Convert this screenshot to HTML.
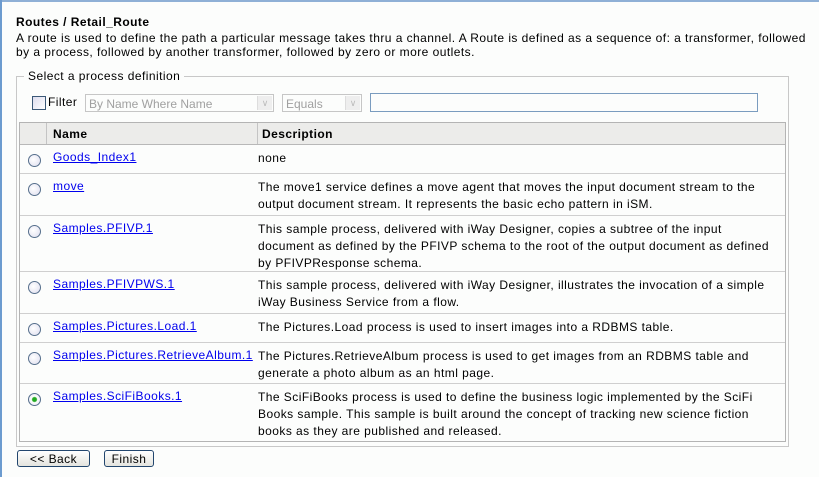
<!DOCTYPE html>
<html><head><style>
body{margin:0;width:819px;height:477px;background:#fcfdfc;font-family:"Liberation Sans",Arial,sans-serif;font-size:12px;color:#000;position:relative;overflow:hidden;letter-spacing:0.45px}
.lb{position:absolute;left:0;top:0;width:2px;height:477px;background:#6c9bcf}
.tb{position:absolute;left:0;top:0;width:819px;height:2px;background:#8fb0d6}
.a{position:absolute}
h1{position:absolute;left:16px;top:15px;margin:0;font-size:12px;font-weight:bold}
.intro{left:16px;top:31px;line-height:14px;width:800px}
.fs{left:16px;top:76px;width:771px;height:369px;border:1px solid #c8c8c8}
.leg{left:24px;top:69px;background:#fcfdfc;padding:0 4px;font-size:12px}
.sel{border:1px solid #c6c6c6;background:#fcfdfc;color:#a0a0a0;height:18px;line-height:18px;padding-left:3px;box-sizing:border-box;letter-spacing:0}
.arr{position:absolute;right:1px;top:1px;width:14px;height:14px;background:#eee;border-left:1px solid #ddd;color:#bbb;font-size:9px;text-align:center;line-height:14px}
.tbl{left:19px;top:122px;width:765px;height:318px;border:1px solid #b4b4b4}
.hd{left:0;top:0;width:765px;height:21px;background:#ececea;border-bottom:1px solid #b8b8b8}
.row{position:absolute;left:0;width:765px;border-bottom:1px solid #cfcfcf}
.row a{position:absolute;left:33px;top:5px;color:#0000ee;text-decoration:underline}
.row .d{position:absolute;left:238px;top:5px;width:519px;line-height:17px}
.rad{position:absolute;left:8px;width:11px;height:11px;border:1px solid #566f8c;border-radius:50%;background:radial-gradient(circle at 40% 40%,#fff,#dde);}
.btn{border:1px solid #22466e;border-radius:3px;background:linear-gradient(#fff,#e4e4de);height:17px;line-height:17px;text-align:center;box-sizing:border-box}
</style></head><body>
<div class="tb"></div><div class="lb"></div>
<h1>Routes / Retail_Route</h1>
<div class="a intro">A route is used to define the path a particular message takes thru a channel. A Route is defined as a sequence of: a transformer, followed by a process, followed by another transformer, followed by zero or more outlets.</div>
<div class="a fs"></div>
<div class="a leg">Select a process definition</div>
<div class="a" style="left:32px;top:96px;width:12px;height:12px;border:1px solid #3b5877;background:linear-gradient(135deg,#dde,#fff)"></div>
<div class="a" style="left:48px;top:95px">Filter</div>
<div class="a sel" style="left:85px;top:94px;width:189px">By Name Where Name<div class="arr">&#8744;</div></div>
<div class="a sel" style="left:282px;top:94px;width:80px">Equals<div class="arr">&#8744;</div></div>
<div class="a" style="left:370px;top:93px;width:388px;height:19px;border:1px solid #7a9cbf;box-sizing:border-box;background:#fcfdfc"></div>
<div class="a tbl">
<div class="a hd"><div class="a" style="left:26px;top:0;width:1px;height:21px;background:#c4c4c4"></div><div class="a" style="left:237px;top:0;width:1px;height:21px;background:#c4c4c4"></div>
<b class="a" style="left:33px;top:4px">Name</b><b class="a" style="left:242px;top:4px">Description</b></div>
<div class="row" style="top:22px;height:28px"><span class="rad" style="top:9px"></span><a>Goods_Index1</a><div class="d">none</div></div>
<div class="row" style="top:51px;height:41px"><span class="rad" style="top:9px"></span><a>move</a><div class="d">The move1 service defines a move agent that moves the input document stream to the output document stream. It represents the basic echo pattern in iSM.</div></div>
<div class="row" style="top:93px;height:55px"><span class="rad" style="top:9px"></span><a>Samples.PFIVP.1</a><div class="d">This sample process, delivered with iWay Designer, copies a subtree of the input document as defined by the PFIVP schema to the root of the output document as defined by PFIVPResponse schema.</div></div>
<div class="row" style="top:149px;height:41px"><span class="rad" style="top:9px"></span><a>Samples.PFIVPWS.1</a><div class="d">This sample process, delivered with iWay Designer, illustrates the invocation of a simple iWay Business Service from a flow.</div></div>
<div class="row" style="top:191px;height:28px"><span class="rad" style="top:9px"></span><a>Samples.Pictures.Load.1</a><div class="d">The Pictures.Load process is used to insert images into a RDBMS table.</div></div>
<div class="row" style="top:220px;height:40px"><span class="rad" style="top:9px"></span><a>Samples.Pictures.RetrieveAlbum.1</a><div class="d">The Pictures.RetrieveAlbum process is used to get images from an RDBMS table and generate a photo album as an html page.</div></div>
<div class="row" style="top:261px;height:57px;border-bottom:none"><span class="rad" style="top:9px;background:radial-gradient(circle,#2a2 0 2px,#fff 3px,#dde)"></span><a>Samples.SciFiBooks.1</a><div class="d">The SciFiBooks process is used to define the business logic implemented by the SciFi Books sample. This sample is built around the concept of tracking new science fiction books as they are published and released.</div></div>
</div>
<div class="a btn" style="left:17px;top:450px;width:73px">&lt;&lt; Back</div>
<div class="a btn" style="left:104px;top:450px;width:50px">Finish</div>
</body></html>
